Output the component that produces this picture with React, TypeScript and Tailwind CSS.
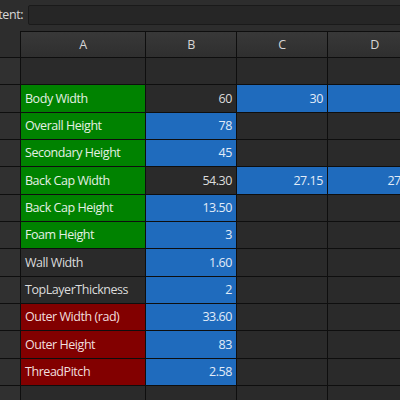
import React from 'react';

type Cell = { text?: string; bg?: 'green' | 'blue' | 'red' };

const BG: Record<string, string> = {
	green: 'bg-[#008200] text-[#e4f0e4]',
	blue: 'bg-[#1f6bbd] text-[#e2ecf8]',
	red: 'bg-[#820000] text-[#f0dede]',
};

const rows: Cell[][] = [
	[{}, {}, {}, {}],
	[{ text: 'Body Width', bg: 'green' }, { text: '60' }, { text: '30', bg: 'blue' }, { text: '', bg: 'blue' }],
	[{ text: 'Overall Height', bg: 'green' }, { text: '78', bg: 'blue' }, {}, {}],
	[{ text: 'Secondary Height', bg: 'green' }, { text: '45', bg: 'blue' }, {}, {}],
	[{ text: 'Back Cap Width', bg: 'green' }, { text: '54.30' }, { text: '27.15', bg: 'blue' }, { text: '27.15', bg: 'blue' }],
	[{ text: 'Back Cap Height', bg: 'green' }, { text: '13.50', bg: 'blue' }, {}, {}],
	[{ text: 'Foam Height', bg: 'green' }, { text: '3', bg: 'blue' }, {}, {}],
	[{ text: 'Wall Width' }, { text: '1.60', bg: 'blue' }, {}, {}],
	[{ text: 'TopLayerThickness' }, { text: '2', bg: 'blue' }, {}, {}],
	[{ text: 'Outer Width (rad)', bg: 'red' }, { text: '33.60', bg: 'blue' }, {}, {}],
	[{ text: 'Outer Height', bg: 'red' }, { text: '83', bg: 'blue' }, {}, {}],
	[{ text: 'ThreadPitch', bg: 'red' }, { text: '2.58', bg: 'blue' }, {}, {}],
	[{}, {}, {}, {}],
];

const COLS = ['w-[125px]', 'w-[91px]', 'w-[91px]', 'w-[94px]'];

export default function App() {
	return (
		<div className="w-[400px] h-[400px] overflow-hidden bg-[#2d2d2d] font-['Open_Sans',sans-serif] text-[12.5px] tracking-[-0.45px] text-[#dcdcdc]">
			{/* Content bar */}
			<div className="h-[31px] flex items-start pt-[5px] whitespace-nowrap">
				<div className="w-[28px] shrink-0 flex justify-end overflow-hidden">
					<span className="pr-[5px] leading-[20px] text-[#d8d8d8]">Content:</span>
				</div>
				<div className="h-[20px] w-[380px] shrink-0 rounded-[2px] border border-[#1a1a1a] bg-[#262626]" />
			</div>

			{/* Sheet */}
			<div className="flex flex-col">
				{/* Column header */}
				<div className="flex h-[27px] border-b border-[#0e0e0e]">
					<div className="w-[20px] shrink-0 bg-[#2d2d2d]" />
					{['A', 'B', 'C', 'D'].map((c, i) => (
						<div
							key={c}
							className={`${COLS[i]} shrink-0 flex items-center justify-center pt-[1px] border-t border-l border-[#0e0e0e] bg-gradient-to-b from-[#383838] to-[#2f2f2f] text-[#d6d6d6]`}
						>
							{c}
						</div>
					))}
				</div>

				{rows.map((row, r) => (
					<div key={r} className="flex h-[27.33px] border-b border-[#0e0e0e] shrink-0">
						<div className="w-[20px] shrink-0 bg-[#303030]" />
						{row.map((cell, i) => (
							<div
								key={i}
								className={`${COLS[i]} shrink-0 flex items-center pt-[1px] whitespace-nowrap overflow-hidden border-l border-[#0e0e0e] ${cell.bg ? BG[cell.bg] : 'bg-[#2a2a2a] text-[#dcdcdc]'} ${i === 0 ? 'justify-start pl-[4px]' : 'justify-end pr-[4px]'}`}
							>
								{cell.text}
							</div>
						))}
					</div>
				))}
			</div>
		</div>
	);
}
